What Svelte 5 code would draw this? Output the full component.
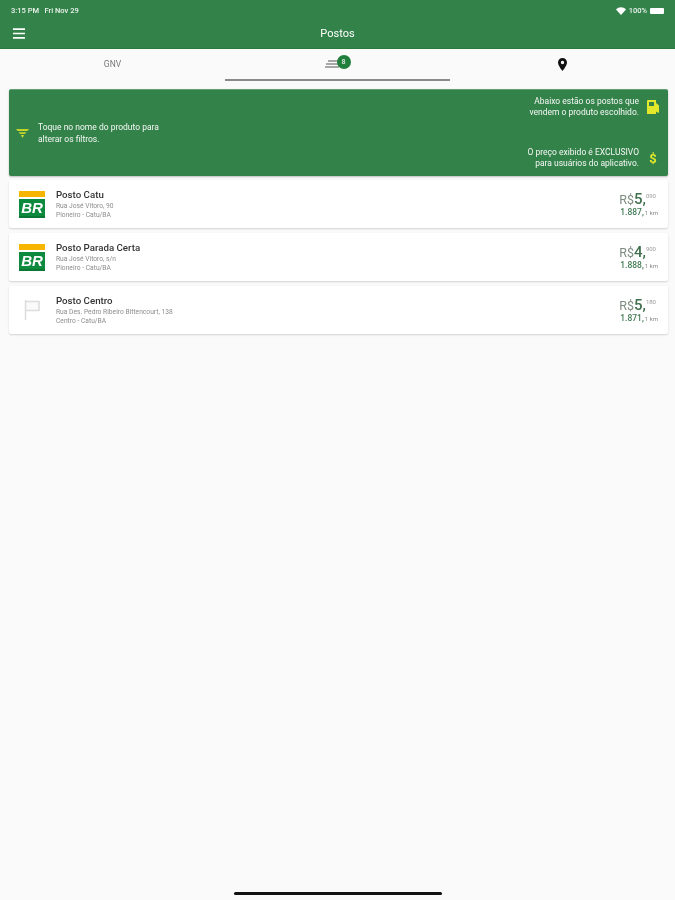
<script>
  const stations = [
    { name: 'Posto Catu', street: 'Rua José Vitoro, 90', area: 'Pioneiro - Catu/BA', brand: 'br', int: '5,', dec: '090', qty: '1.887,', suf: '1 km' },
    { name: 'Posto Parada Certa', street: 'Rua José Vitoro, s/n', area: 'Pioneiro - Catu/BA', brand: 'br', int: '4,', dec: '900', qty: '1.888,', suf: '1 km' },
    { name: 'Posto Centro', street: 'Rua Des. Pedro Ribeiro Bittencourt, 138', area: 'Centro - Catu/BA', brand: 'flag', int: '5,', dec: '180', qty: '1.871,', suf: '1 km' }
  ];
</script>

<div class="screen">
  <header class="top">
    <div class="status">
      <span>3:15 PM &nbsp; Fri Nov 29</span>
      <span class="status-right">
        <svg width="10" height="8" viewBox="0 0 10 8"><path d="M0 2.4C2.8-.6 7.2-.6 10 2.4L5 8Z" fill="#fff"/></svg>
        <span>100%</span>
        <span class="battery"></span>
      </span>
    </div>
    <div class="bar">
      <svg class="menu" width="12" height="11" viewBox="0 0 12 11"><path d="M0 1.2h12M0 5.5h12M0 9.8h12" stroke="#fff" stroke-width="1.7"/></svg>
      <span class="title">Postos</span>
    </div>
  </header>

  <nav class="tabs">
    <div class="tab gnv">GNV</div>
    <div class="tab active">
      <svg width="14" height="8" viewBox="0 0 14 8"><path d="M3 1h11M1 4h13M0 7h14" stroke="#8c8c8c" stroke-width="1.3"/></svg>
      <span class="badge">8</span>
    </div>
    <div class="tab">
      <svg width="9" height="13" viewBox="0 0 9 13"><path fill-rule="evenodd" d="M4.5 0C2 0 0 2 0 4.5 0 7.7 4.5 13 4.5 13S9 7.7 9 4.5C9 2 7 0 4.5 0Zm0 6.2a1.7 1.7 0 1 1 0-3.4 1.7 1.7 0 0 1 0 3.4Z" fill="#111"/></svg>
    </div>
  </nav>

  <main class="content">
    <section class="banner">
      <div class="hint">
        <svg width="13" height="9" viewBox="0 0 13 9"><path d="M0 0h13l-1.6 2H1.6ZM2.6 3.2h7.8L9 5H4ZM4.8 6h3.4L6.5 9Z" fill="#c5d42d"/></svg>
        <p>Toque no nome do produto para<br />alterar os filtros.</p>
      </div>
      <div class="notes">
        <div class="note">
          <p>Abaixo estão os postos que<br />vendem o produto escolhido.</p>
          <svg width="13" height="14" viewBox="0 0 13 14"><path fill-rule="evenodd" d="M1 0h8v14H0V1a1 1 0 0 1 1-1Zm1 2v4h5V2Z" fill="#e4e82c"/><path d="M9 3l3 2.4V12a1 1 0 0 1-1.5.6L9 11.500Z" fill="#e4e82c"/></svg>
        </div>
        <div class="note">
          <p>O preço exibido é EXCLUSIVO<br />para usuários do aplicativo.</p>
          <span class="dollar">$</span>
        </div>
      </div>
    </section>

    {#each stations as s}
      <article class="card">
        <div class="logo">
          {#if s.brand === 'br'}
            <div class="br-top"></div>
            <div class="br-box">BR</div>
          {:else}
            <svg width="18" height="22" viewBox="0 0 18 22"><path d="M2.500 1v20M3 2.500h13v9H3" fill="#fafafa" stroke="#dcdcdc" stroke-width="1.500"/></svg>
          {/if}
        </div>
        <div class="info">
          <h2>{s.name}</h2>
          <p>{s.street}</p>
          <p>{s.area}</p>
        </div>
        <div class="price">
          <div class="amount"><span class="cur">R$</span><b>{s.int}</b><sup>{s.dec}</sup></div>
          <div class="dist"><b>{s.qty}</b><span>{s.suf}</span></div>
        </div>
      </article>
    {/each}
  </main>

  <div class="home"></div>
</div>

<style>
  :global(body) {
    margin: 0;
    background: #fafafa;
  }

  .screen {
    width: 675px;
    height: 900px;
    display: flex;
    flex-direction: column;
    background: #fafafa;
    font-family: Roboto, "Liberation Sans", sans-serif;
    overflow: hidden;
    filter: blur(0.5px);
  }

  .top {
    height: 49px;
    box-sizing: border-box;
    background: #33824a;
    border-bottom: 1px solid #2a7a40;
    color: #fff;
    flex: none;
  }

  .status {
    height: 15px;
    padding: 0 11px 0 11px;
    display: flex;
    justify-content: space-between;
    align-items: flex-end;
    font-size: 7.5px;
    font-weight: 500;
    color: #eef5ef;
  }

  .status-right {
    display: flex;
    align-items: center;
    gap: 3px;
  }

  .battery {
    width: 14px;
    height: 6px;
    background: #fff;
    border-radius: 1px;
  }

  .bar {
    height: 33px;
    box-sizing: border-box;
    padding-top: 3px;
    display: flex;
    align-items: center;
    justify-content: center;
    position: relative;
  }

  .menu {
    position: absolute;
    left: 13px;
    top: 13px;
  }

  .title {
    font-size: 11px;
    font-weight: 400;
  }

  .tabs {
    height: 32px;
    flex: none;
    display: grid;
    grid-template-columns: repeat(3, 225px);
  }

  .tab {
    display: flex;
    align-items: center;
    justify-content: center;
    box-sizing: border-box;
    border-bottom: 2px solid transparent;
  }

  .gnv {
    font-size: 8.5px;
    color: #777;
  }

  .active {
    border-bottom-color: #8a8a8a;
  }

  .badge {
    width: 14px;
    height: 14px;
    border-radius: 50%;
    background: #1f7f3b;
    color: #cfe3d4;
    font-size: 7px;
    font-weight: 700;
    display: flex;
    align-items: center;
    justify-content: center;
    margin: -5px 0 0 -2px;
  }

  .content {
    padding: 8px 7px 0 9px;
    display: flex;
    flex-direction: column;
  }

  .banner {
    height: 87px;
    box-sizing: border-box;
    background: #33824a;
    border-radius: 2px;
    border-top: 1px solid #63a077;
    box-shadow: 0 1px 2px rgba(0, 0, 0, 0.25);
    display: flex;
    justify-content: space-between;
    color: #f5f8f5;
    font-size: 8.5px;
    font-weight: 400;
    line-height: 11px;
    margin-bottom: 4px;
  }

  .banner p {
    margin: 0;
  }

  .hint {
    display: flex;
    align-items: center;
    gap: 9px;
    padding-left: 7px;
    line-height: 12px;
  }

  .notes {
    display: flex;
    flex-direction: column;
    justify-content: space-between;
    padding: 6px 8px 7px 0;
  }

  .note {
    display: flex;
    align-items: center;
    justify-content: flex-end;
    gap: 8px;
    text-align: right;
  }

  .note svg,
  .dollar {
    flex: none;
    width: 13px;
    text-align: center;
  }

  .dollar {
    color: #e4e82c;
    font-size: 13px;
    font-weight: 700;
    padding-right: 1px;
    box-sizing: border-box;
  }

  .card {
    height: 48px;
    box-sizing: border-box;
    background: #fff;
    box-shadow: 0 1px 2px rgba(0, 0, 0, 0.16);
    margin-bottom: 5px;
    display: flex;
    align-items: center;
    padding: 0 10px 0 10px;
    border-radius: 2px;
  }

  .logo {
    width: 26px;
    margin-right: 11px;
    display: flex;
    flex-direction: column;
    align-items: center;
    flex: none;
  }

  .br-top {
    width: 26px;
    height: 6px;
    background: #f7b500;
    margin-bottom: 2px;
  }

  .br-box {
    width: 26px;
    height: 19px;
    background: #0d8a3e;
    color: #fff;
    font-family: "Liberation Sans", sans-serif;
    font-size: 15px;
    font-style: italic;
    font-weight: 700;
    line-height: 17px;
    text-align: center;
    box-sizing: border-box;
    border-bottom: 2px solid #0a7733;
  }

  .info {
    flex: 1;
  }

  .info h2 {
    margin: 0 0 1px;
    font-size: 9.7px;
    font-weight: 500;
    line-height: 12px;
    color: #333;
  }

  .info p {
    margin: 0;
    font-size: 6.7px;
    line-height: 8.500px;
    color: #8d8d8d;
  }

  .price {
    text-align: right;
    padding-top: 2px;
  }

  .amount {
    color: #7d8c80;
    font-size: 12.5px;
    line-height: 15px;
  }

  .amount b {
    font-size: 15px;
    font-weight: 500;
    color: #3f6f4c;
  }

  .amount sup {
    font-size: 6px;
    color: #999;
    vertical-align: 6px;
    line-height: 0;
    margin-right: 2px;
  }

  .dist {
    font-size: 8.5px;
    line-height: 10px;
    color: #3f7a52;
  }

  .dist b {
    font-weight: 500;
  }

  .dist span {
    font-size: 6px;
    color: #888;
    margin-left: 1px;
  }

  .home {
    position: absolute;
    left: 234px;
    top: 892px;
    width: 208px;
    height: 3px;
    border-radius: 2px;
    background: #111;
  }
</style>
